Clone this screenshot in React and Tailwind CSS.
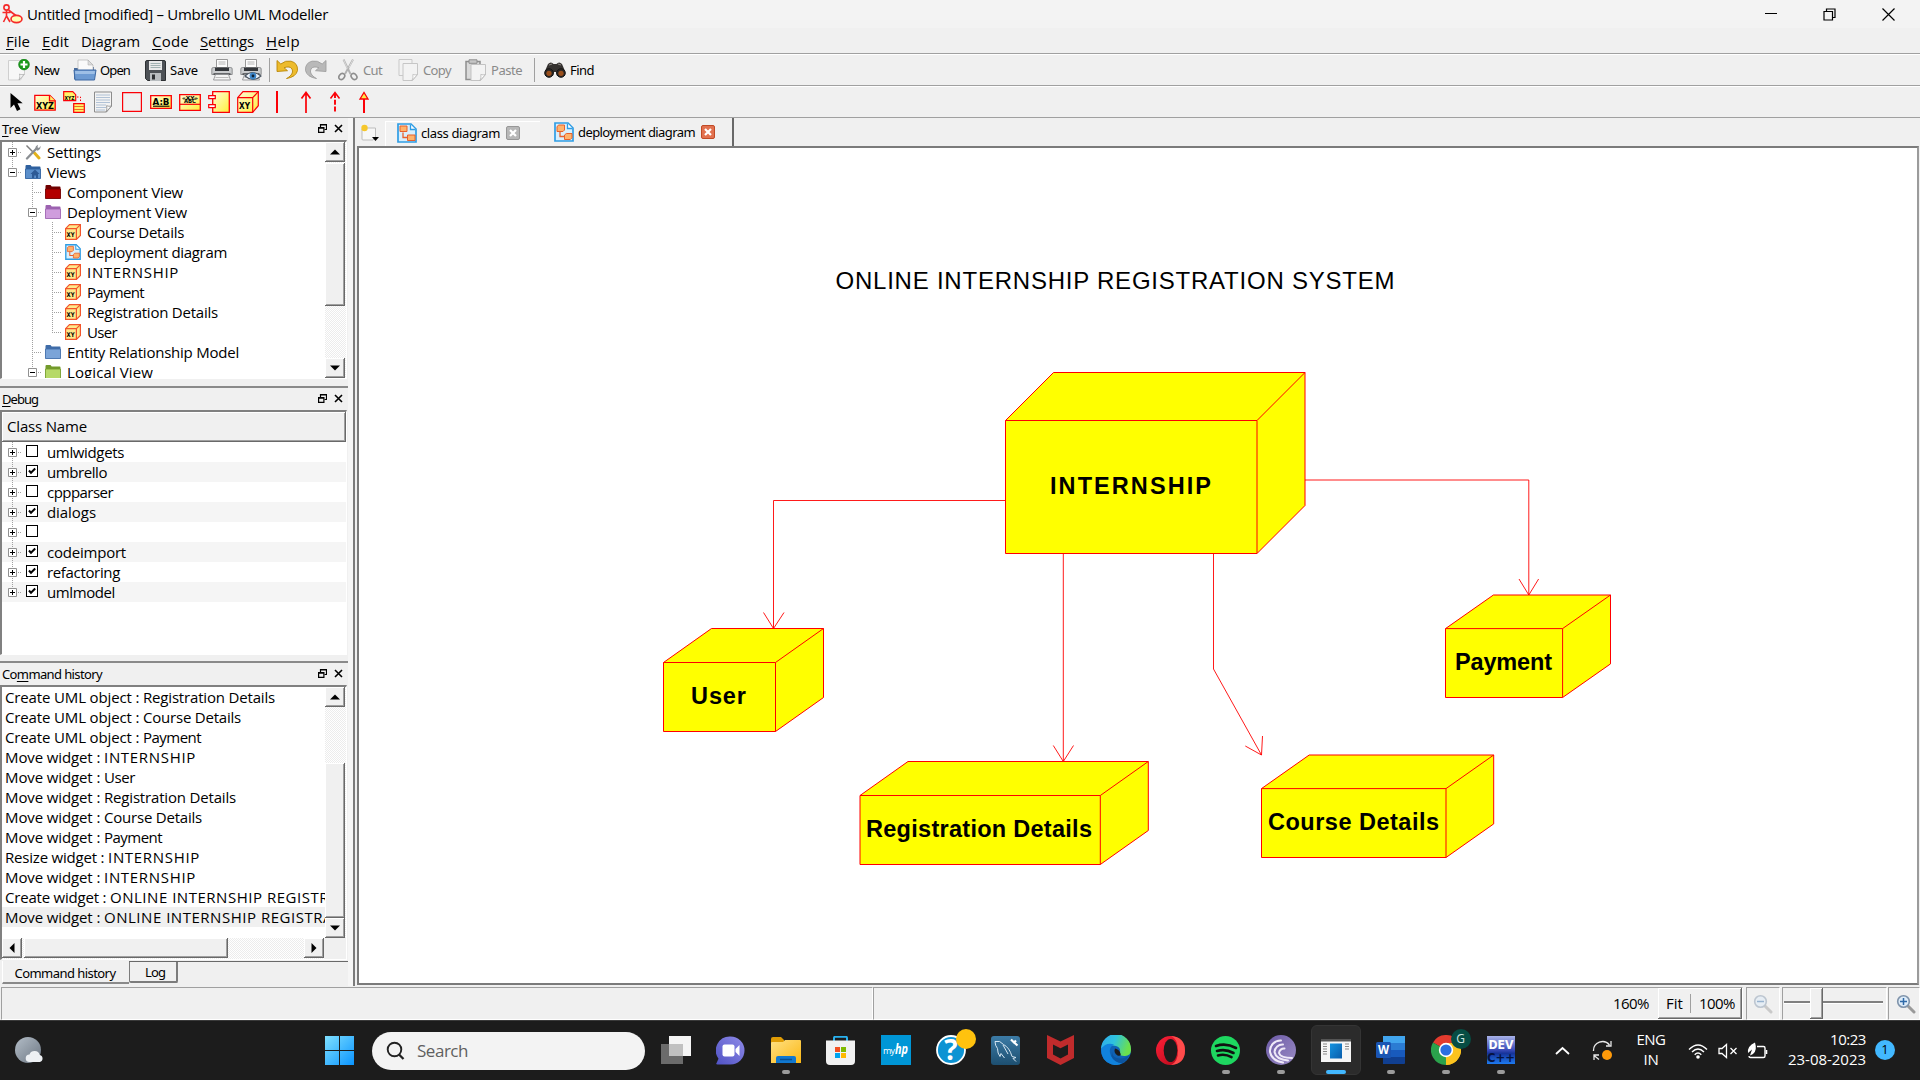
import React, { useLayoutEffect, useRef, useState } from "react";

const UI = "font-['Open_Sans','Noto_Sans',sans-serif]";
const SMALL = "font-['Noto_Sans','Open_Sans',sans-serif]";

/* Label whose letter spacing is computed so that it takes a given width. */
function Fit({ w, className = "", children }) {
  const ref = useRef(null);
  const [ls, setLs] = useState(null);
  useLayoutEffect(() => {
    const el = ref.current;
    const nat = el.getBoundingClientRect().width;
    setLs((w - nat) / Math.max(1, el.textContent.length));
  }, [w]);
  return (
    <span
      ref={ref}
      className={"inline-block shrink-0 whitespace-pre " + className}
      style={ls === null ? undefined : { letterSpacing: ls + "px" }}
    >
      {children}
    </span>
  );
}

const U = ({ children }) => <u className="underline decoration-1 underline-offset-2">{children}</u>;

/* ---------- icons ---------- */
const S = ({ w = 22, h = w, vb, children, className = "" }) => (
  <svg width={w} height={h} viewBox={vb || `0 0 ${w} ${h}`} className={"block shrink-0 " + className}>
    {children}
  </svg>
);

const AppIcon = () => (
  <S w={21} h={20}>
    <g fill="none" stroke="#f52a2a" strokeWidth="1.6">
      <circle cx="4.5" cy="3.5" r="2.6" />
      <path d="M4.500 6v6M.5 8.500h8M4.500 12 1.500 18M4.500 12l3.500 6M6.500 6l8 6" />
      <ellipse cx="14.500" cy="15" rx="5.500" ry="3.600" fill="#ffffb0" />
    </g>
  </S>
);
const NewIcon = () => (
  <S>
    <path d="M.5 1.500h16v13l-4 6.500h-12z" fill="#f7f7f7" stroke="#cfcfcf" />
    <path d="M11 21c1-3 1-4 .5-6 2 1 3 1 5 0z" fill="#fff" stroke="#aaa" strokeWidth=".8" />
    <circle cx="16" cy="5.500" r="5.400" fill="#1c9a1c" stroke="#0d7a12" strokeWidth=".6" />
    <path d="M16 2v7M12.500 5.500h7" stroke="#fff" strokeWidth="2.200" />
  </S>
);
const OpenIcon = () => (
  <S w={24} h={22}>
    <path d="M1 9h4V5h3l3 3h10v12H1z" fill="#4a6a98" />
    <path d="M5 12V1h10l5 5v7z" fill="#fafafa" stroke="#bbb" strokeWidth=".8" />
    <path d="M15 1v5h5z" fill="#ddd" stroke="#aaa" strokeWidth=".5" />
    <path d="M1 11h22l-1.500 10H2z" fill="#6d9bd3" stroke="#3e69a3" />
    <path d="M2 12h20l-.4 3H2.300z" fill="#9dbfe6" />
  </S>
);
const SaveIcon = () => (
  <S w={21} h={21}>
    <path d="M.5 2q0-1.500 1.500-1.500h17q1.500 0 1.500 1.500v18.500H2.500l-2-2z" fill="#4d5156" stroke="#2d3033" />
    <path d="M4 1h13v9H4z" fill="#e9e9e9" />
    <path d="M5.500 3.500h10M5.500 5.500h10M5.500 7.500h10" stroke="#9aa" strokeWidth=".9" />
    <path d="M5 13h11v8H5z" fill="#b9bdc0" />
    <path d="M7 14.500h3v5H7z" fill="#2d3033" />
  </S>
);
const PrinterIcon = ({ eye }) => (
  <S>
    <path d="M5.500.5h11v8h-11z" fill="#fdfdfd" stroke="#8f8f8f" strokeWidth=".9" />
    <path d="M7.500 3h7M7.500 5h7" stroke="#b4b4b4" />
    <path d="M.8 10q0-1.500 1.500-1.500h2.200v2h13v-2h2.200q1.500 0 1.500 1.500v5.500H.8z" fill="#c9cbcd" stroke="#7c7e80" strokeWidth=".8" />
    <path d="M4 8.500h14v3.500H4z" fill="#33363a" />
    <path d="M2.500 15h17" stroke="#3b3e41" strokeWidth="1.400" />
    <path d="M4.500 15.500h13l2 5.500h-17z" fill="#f4f4f4" stroke="#88898b" strokeWidth=".8" />
    <path d="M4.500 18.500h13" stroke="#bbb" />
    {eye && (
      <g>
        <path d="M5 17q7-7 16 0-8 7-16 0z" fill="#eef4fb" stroke="#4b5560" strokeWidth="1.100" />
        <circle cx="13" cy="17" r="3.400" fill="#3d86c9" />
        <circle cx="13" cy="17" r="1.400" fill="#112233" />
      </g>
    )}
  </S>
);
const UndoIcon = ({ dim }) => (
  <S className={dim ? "-scale-x-100" : ""}>
    <path
      d="M1 1.500v11l10.500-.8-3.500-3q6-2 8 1.300 2 4-3 8-1.500 1-2.500 1.500Q20 18 21.500 11.500 22 4 15 2.200 9.500 1 4.800 5z"
      fill={dim ? "#b9b9b9" : "#edbb2c"}
      stroke={dim ? "#9f9f9f" : "#b98708"}
      strokeWidth=".9"
    />
  </S>
);
const CutIcon = () => (
  <S w={20} h={22}>
    <path d="M5.500.5 12.500 15M15 .5 7 15" stroke="#b2b2b2" strokeWidth="1.900" fill="none" />
    <path d="M5.500.5l4 9M15 .5l-4 8" stroke="#e9e9e9" strokeWidth=".7" />
    <ellipse cx="3.800" cy="17.500" rx="2.600" ry="3.300" transform="rotate(38 3.800 17.500)" fill="none" stroke="#8e8e8e" strokeWidth="1.600" />
    <ellipse cx="16" cy="17.500" rx="2.600" ry="3.300" transform="rotate(-38 16 17.500)" fill="none" stroke="#8e8e8e" strokeWidth="1.600" />
  </S>
);
const CopyIcon = () => (
  <S w={21} h={22}>
    <path d="M1 .5h13v16H1z" fill="#f2f2f2" stroke="#c9c9c9" />
    <path d="M5 4.500h14.500v11l-5 6H5z" fill="#f3f3f3" stroke="#c6c6c6" />
    <path d="M14 21.500q1.500-3 .8-6 2.200.8 4.700 0z" fill="#fff" stroke="#bcbcbc" strokeWidth=".8" />
  </S>
);
const PasteIcon = () => (
  <S w={22}>
    <path d="M1 2.500h14v18H1z" fill="#dadada" stroke="#8f8f8f" strokeWidth="1.500" />
    <path d="M4 .8h8v3.500H4z" fill="#c6c6c6" stroke="#8f8f8f" />
    <path d="M6 5.500h14.500v10l-5 6H6z" fill="#f3f3f3" stroke="#c3c3c3" />
    <path d="M15 21.500q1.500-3 .8-6 2.200.8 4.700 0z" fill="#fff" stroke="#b5b5b5" strokeWidth=".8" />
  </S>
);
const FindIcon = () => (
  <S w={22} h={16}>
    <path d="M4 2q3-3 5.500 0h3Q15-1 18 2l3 7v5h-8l-1-4h-2l-1 4H1V9z" fill="#34312f" />
    <path d="M5 3l3-1M14 2l3 1" stroke="#8b8783" strokeWidth="1.200" />
    <circle cx="5" cy="11" r="4.300" fill="#2b2725" stroke="#151515" />
    <circle cx="17" cy="11" r="4.300" fill="#2b2725" stroke="#151515" />
    <circle cx="5" cy="11.300" r="2.600" fill="#9a4f1c" />
    <circle cx="17" cy="11.300" r="2.600" fill="#9a4f1c" />
  </S>
);

const IconText = ({ x, y, size, children, len }) => (
  <text x={x} y={y} fontSize={size} fontWeight="700" fill="#000" textLength={len} lengthAdjust="spacingAndGlyphs" fontFamily="DejaVu Sans, sans-serif">
    {children}
  </text>
);
const Grad = () => (
  <svg width="0" height="0" className="absolute">
    <defs>
      <linearGradient id="yel" x1="0" y1="0" x2="1" y2="1">
        <stop offset="0" stopColor="#fffcdc" />
        <stop offset="1" stopColor="#ffef3a" />
      </linearGradient>
      <linearGradient id="win" x1="0" y1="0" x2="1" y2="1">
        <stop offset="0" stopColor="#7fe0ff" />
        <stop offset="1" stopColor="#0a94ff" />
      </linearGradient>
      <linearGradient id="fold" x1="0" y1="0" x2="1" y2="1">
        <stop offset="0" stopColor="#ffe083" />
        <stop offset="1" stopColor="#fbb814" />
      </linearGradient>
      <linearGradient id="chat" x1="0" y1="1" x2="1" y2="0">
        <stop offset="0" stopColor="#4f52c4" />
        <stop offset="1" stopColor="#8f8ae8" />
      </linearGradient>
      <linearGradient id="edgeTop" x1="0" y1="0" x2="1" y2="0.300">
        <stop offset="0" stopColor="#2ea8ee" />
        <stop offset=".5" stopColor="#2fc3dd" />
        <stop offset="1" stopColor="#6be04d" />
      </linearGradient>
      <linearGradient id="opera" x1="0" y1="0" x2="1" y2="1">
        <stop offset="0" stopColor="#ff2038" />
        <stop offset="1" stopColor="#b00718" />
      </linearGradient>
      <linearGradient id="bt" x1="0" y1="0" x2="1" y2="1">
        <stop offset="0" stopColor="#6c5aa6" />
        <stop offset="1" stopColor="#9a8cc4" />
      </linearGradient>
      <linearGradient id="app" x1="0" y1="0" x2="1" y2="1">
        <stop offset="0" stopColor="#1593e0" />
        <stop offset="1" stopColor="#0a5dab" />
      </linearGradient>
      <linearGradient id="moon" x1="0" y1="0" x2="1" y2="1">
        <stop offset="0" stopColor="#b3bdc7" />
        <stop offset="1" stopColor="#6d7783" />
      </linearGradient>
      <linearGradient id="dev" x1="0" y1="0" x2="0" y2="1">
        <stop offset="0" stopColor="#a8b2e8" />
        <stop offset=".5" stopColor="#3a4ab8" />
        <stop offset=".62" stopColor="#16339a" />
        <stop offset="1" stopColor="#1d7af0" />
      </linearGradient>
      <linearGradient id="sql" x1="0" y1="0" x2="0" y2="1">
        <stop offset="0" stopColor="#3c7ba6" />
        <stop offset="1" stopColor="#1d4f70" />
      </linearGradient>
    </defs>
  </svg>
);

const red = "#fb0007";
const ToolIcons = [
  <S key="a" w={13} h={18}>
    <path d="M.5 0v15l3.500-3.500 3 6.500 3.500-1.700-3-6h5.200z" fill="#000" />
  </S>,
  <S key="b" h={17}>
    <path d="M.8 1.300h15l5.400 5.500v9.400H.8z" fill="url(#yel)" stroke={red} strokeWidth="1.300" />
    <path d="M15.500 1.300v5.500h5.700" fill="#ffee66" stroke={red} strokeWidth="1.300" />
    <IconText x="2" y="14.500" size="9" len="18">XYZ</IconText>
  </S>,
  <S key="c">
    <path d="M.7.7h9l3 3v6H.7z" fill="#fff36a" stroke={red} strokeWidth="1.200" />
    <IconText x="1.500" y="8.500" size="5.500" len="10">XYZ</IconText>
    <path d="M14 6h3.500v5" fill="none" stroke={red} strokeDasharray="1.500 1.500" />
    <path d="M10.700 12.700h10.600v8.600H10.700z" fill="#fff36a" stroke={red} strokeWidth="1.200" />
    <path d="M11 15.500h10M11 18.500h10" stroke="#f06a20" />
  </S>,
  <S key="d" w={20} h={22}>
    <path d="M1.500 1h17v14l-5 6h-12z" fill="#f3f3f3" stroke="#8c8c8c" />
    <path d="M3 4h14M3 6.500h14M3 9h14M3 11.500h14M3 14h10M3 16.500h10M3 19h9" stroke="#a9bcd2" strokeWidth=".9" />
    <path d="M13 21q1.500-3 .6-6.300 2.200 1 4.900.3z" fill="#fff" stroke="#8c8c8c" strokeWidth=".8" />
  </S>,
  <S key="e" w={20} h={22}>
    <path d="M.6 1.600h18.800v18.800H.6z" fill="none" stroke={red} strokeWidth="1.200" />
  </S>,
  <S key="f" h={14}>
    <path d="M.7.7h20.600v12.600H.7z" fill="url(#yel)" stroke={red} strokeWidth="1.300" />
    <IconText x="2.500" y="9.500" size="8.500" len="17">A:B</IconText>
    <path d="M3 11.200h16.500" stroke="#000" strokeWidth="1.100" />
  </S>,
  <S key="g" h={17}>
    <path d="M.7.7h20.600v15.600H.7z" fill="url(#yel)" stroke={red} strokeWidth="1.300" />
    <IconText x="3" y="5.800" size="5.500" len="16">«XY»</IconText>
    <IconText x="5" y="9" size="6" len="12">ABC</IconText>
    <path d="M1 10.300h20" stroke={red} strokeWidth="1.200" />
  </S>,
  <S key="h">
    <path d="M4.700.7h16.600v20.600H4.700z" fill="url(#yel)" stroke={red} strokeWidth="1.300" />
    <path d="M.7 4.700h6.600v3H.7zM.7 13.700h6.600v3H.7z" fill="#fff" stroke={red} strokeWidth="1.200" />
  </S>,
  <S key="i">
    <path d="M.7 6.700 6 .7h15.300v14l-5.600 6.600H.7z" fill="url(#yel)" stroke={red} strokeWidth="1.200" />
    <path d="M.7 6.700h15v14.600M15.700 6.700l5.600-6" fill="none" stroke={red} strokeWidth="1.200" />
    <IconText x="2" y="18" size="9" len="11">XY</IconText>
  </S>,
  <S key="j" w={4} h={22}>
    <path d="M2 0v22" stroke={red} strokeWidth="2" />
  </S>,
  <S key="k" w={12} h={22}>
    <path d="M6 1v21M1.500 7.500 6 1.500l4.500 6" fill="none" stroke={red} strokeWidth="1.700" />
  </S>,
  <S key="l" w={12} h={22}>
    <path d="M6 2v20" fill="none" stroke={red} strokeWidth="1.900" strokeDasharray="5 1.800" />
    <path d="M1.500 7.500 6 1.500l4.500 6" fill="none" stroke={red} strokeWidth="1.500" />
  </S>,
  <S key="m" w={12} h={22}>
    <path d="M6 8v14" stroke={red} strokeWidth="2" />
    <path d="M2 8 6 1.500 10 8z" fill="#ffe94a" stroke={red} strokeWidth="1.300" />
  </S>,
];

const CubeSmall = () => (
  <S w={16}>
    <path d="M.6 4.600 4.500.6h10.900v10.900l-4 3.900H.6z" fill="#ffe98a" stroke="#f2552c" strokeWidth="1.200" />
    <path d="M.6 4.600h10.800v10.800M11.400 4.600l4-4" fill="none" stroke="#f2552c" strokeWidth="1.200" />
    <IconText x="1.500" y="13" size="6.500" len="8">XY</IconText>
  </S>
);
const DiagramIcon = ({ size = 16, dep }) => (
  <S w={size} h={size} vb="0 0 20 20">
    <path d="M1 1h13l5 5v13H1z" fill="#d9effc" stroke="#2f9de4" strokeWidth="1.700" />
    <path d="M13.500 1.500v5h5" fill="#fff" stroke="#2f9de4" strokeWidth="1.300" />
    <path d={dep ? "M3 4.500 4.800 3h5.700v5L9 9.500H3z" : "M3 3h7v5.500H3z"} fill="#ffb36b" stroke="#e8612c" />
    <path d={dep ? "M10.500 13l1.800-1.500H18v4.300L16.300 17.500h-5.800z" : "M10.500 12H18v5.500h-7.500z"} fill="#ffb36b" stroke="#e8612c" />
    <path d="M6 9.500v5h4.500" fill="none" stroke="#e8612c" strokeWidth="1.300" />
  </S>
);
const Folder = ({ c, d, home }) => (
  <S w={16}>
    <path d="M.5 2q0-1 1-1h4l1.200 1.500h8q.8 0 .8 1V14.500H.5z" fill={d} />
    <path d="M.5 5h15v9.500H.5z" fill={c} stroke={d} strokeWidth=".8" />
    {home && <path d="M10 5.500 5.500 10H7v4h2.200v-2.500h1.800V14h2v-4h1.500z" fill="#2d5a96" />}
  </S>
);
const ToolsIcon = () => (
  <S w={16}>
    <path d="M1.500 1.500 8 8" stroke="#7e7e7e" strokeWidth="1.500" fill="none" />
    <path d="M9.500 9l4.500 5" stroke="#e3b21b" strokeWidth="3" strokeLinecap="round" />
    <path d="M2 14.500 11 5" stroke="#8b8f93" strokeWidth="2.300" strokeLinecap="round" />
    <path d="M10.300 5.500q-.6-3.500 2.700-4.700l-.5 2.500 1.500.8 1.500-2q.6 3.500-2.700 4.600z" fill="#8b8f93" />
  </S>
);

/* ---------- window parts ---------- */
const MENU = [
  [24, 12, <><U>F</U>ile</>],
  [27, 12, <><U>E</U>dit</>],
  [59, 12, <>D<U>i</U>agram</>],
  [37, 11, <><U>C</U>ode</>],
  [54, 12, <><U>S</U>ettings</>],
  [34, 0, <><U>H</U>elp</>],
];

const Tb = ({ icon, label, w, g, dim }) => (
  <div className="flex shrink-0 items-center">
    {icon}
    {label && (
      <Fit w={w} className={"text-[13px] leading-none " + g + (dim ? " text-[#8a8a8a]" : " text-black")}>
        {label}
      </Fit>
    )}
  </div>
);

const DockTitle = ({ w, children }) => (
  <div className={"flex h-[22px] items-center justify-between pl-0.5 pr-[5px] text-[13px] leading-none " + SMALL}>
    <Fit w={w}>{children}</Fit>
    <div className="flex items-center gap-[7px] pb-0.5">
      <S w={9} h={9}>
        <path d="M2.500 3V.5h6v5H6.500M2.500 1h6" fill="none" stroke="#000" strokeWidth="1.200" />
        <path d="M.6 3.600h5.300v4.700H.6zM.6 4.200h5.300" fill="none" stroke="#000" strokeWidth="1.200" />
      </S>
      <S w={9} h={9}>
        <path d="M1 1l7 7M8 1 1 8" stroke="#000" strokeWidth="1.600" />
      </S>
    </div>
  </div>
);

const RAISED = "bg-[#f0f0f0] border-r border-b border-[#696969] shadow-[inset_1px_1px_0_#ffffff,inset_-1px_-1px_0_#a0a0a0]";
const Arrow = ({ d }) => (
  <S w={10} h={10}>
    <path
      fill="#000"
      d={{ up: "M0 7.500 5 2.500 10 7.500z", down: "M0 2.500 5 7.500 10 2.500z", left: "M7.500 0 2.500 5 7.500 10z", right: "M2.500 0 7.500 5 2.500 10z" }[d]}
    />
  </S>
);
const Btn = ({ d }) => (
  <div className={"flex h-5 w-5 shrink-0 items-center justify-center " + RAISED}>
    <Arrow d={d} />
  </div>
);

/* One 20px cell of the dotted tree guide. */
const Guide = ({ up, down, right, box }) => (
  <S w={20} h={20}>
    <g stroke="#a0a0a0" strokeDasharray="1 1" fill="none">
      {up && <path d="M10.500 0v10" />}
      {down && <path d="M10.500 10v10" />}
      {right && <path d="M10 10.500h10" />}
    </g>
    {box && (
      <g>
        <path d="M6.500 6.500h8v8h-8z" fill="#fff" stroke="#919191" />
        <path d={box === "+" ? "M8 10.500h5M10.500 8v5" : "M8 10.500h5"} stroke="#000" />
      </g>
    )}
  </S>
);
const Blank = () => <div className="w-5 shrink-0" />;

const TREE = [
  [[{ up: 1, down: 1, right: 1, box: "+" }], <ToolsIcon />, "Settings", 54],
  [[{ up: 1, right: 1, box: "-" }], <Folder c="#5b8fcb" d="#2f619f" home />, "Views", 39],
  [[0, { up: 1, down: 1, right: 1 }], <Folder c="#b30000" d="#700000" />, "Component View", 116],
  [[0, { up: 1, down: 1, right: 1, box: "-" }], <Folder c="#cf9ddd" d="#9c62b0" />, "Deployment View", 120],
  [[0, { up: 1, down: 1 }, { up: 1, down: 1, right: 1 }], <CubeSmall />, "Course Details", 97],
  [[0, { up: 1, down: 1 }, { up: 1, down: 1, right: 1 }], <DiagramIcon dep />, "deployment diagram", 140],
  [[0, { up: 1, down: 1 }, { up: 1, down: 1, right: 1 }], <CubeSmall />, "INTERNSHIP", 92],
  [[0, { up: 1, down: 1 }, { up: 1, down: 1, right: 1 }], <CubeSmall />, "Payment", 57],
  [[0, { up: 1, down: 1 }, { up: 1, down: 1, right: 1 }], <CubeSmall />, "Registration Details", 131],
  [[0, { up: 1, down: 1 }, { up: 1, right: 1 }], <CubeSmall />, "User", 30],
  [[0, { up: 1, down: 1, right: 1 }], <Folder c="#7ba4d8" d="#3f6ca8" />, "Entity Relationship Model", 172],
  [[0, { up: 1, down: 1, right: 1, box: "-" }], <Folder c="#b6d968" d="#739a2b" />, "Logical View", 86],
];
const CLASSES = [
  ["umlwidgets", 77, false],
  ["umbrello", 60, true],
  ["cppparser", 66, false],
  ["dialogs", 49, true],
  ["", 0, false],
  ["codeimport", 79, true],
  ["refactoring", 73, true],
  ["umlmodel", 68, true],
];
/* Each entry: action text and its width, object text and its width. */
const HISTORY = [
  ["Create UML object : ", 138, "Registration Details", 132],
  ["Create UML object : ", 138, "Course Details", 98],
  ["Create UML object : ", 138, "Payment", 58],
  ["Move widget : ", 99, "INTERNSHIP", 92],
  ["Move widget : ", 99, "User", 31],
  ["Move widget : ", 99, "Registration Details", 132],
  ["Move widget : ", 99, "Course Details", 98],
  ["Move widget : ", 99, "Payment", 58],
  ["Resize widget : ", 103, "INTERNSHIP", 92],
  ["Move widget : ", 99, "INTERNSHIP", 92],
  ["Create widget : ", 105, "ONLINE INTERNSHIP REGISTRATION SYSTEM", 329],
  ["Move widget : ", 99, "ONLINE INTERNSHIP REGISTRATION SYSTEM", 329],
];
const HATCH = "bg-[repeating-conic-gradient(#ffffff_0_25%,#ececec_0_50%)] bg-[length:2px_2px]";
const FRAME = "w-[347px] border-t-2 border-l-2 border-r border-b border-t-[#808080] border-l-[#808080] border-r-[#ffffff] border-b-[#ffffff] bg-white";

function Docks() {
  return (
    <div className={"flex w-[348px] shrink-0 flex-col " + UI}>
      <DockTitle w={58}><U>T</U>ree View</DockTitle>
      <div className={"flex h-[239px] " + FRAME}>
        <div className="h-[236px] w-[323px] overflow-hidden">
          {TREE.map(([cells, icon, label, w], i) => (
            <div key={i} className="flex h-5 items-center">
              {cells.map((c, j) => (c ? <Guide key={j} {...c} /> : <Blank key={j} />))}
              <div className="ml-[3px] mr-1.5">{icon}</div>
              <Fit w={w} className="text-[15px] leading-5">{label}</Fit>
            </div>
          ))}
        </div>
        <div className={"flex w-[21px] flex-col " + HATCH}>
          <Btn d="up" />
          <div className={"mt-px h-[143px] w-5 " + RAISED} />
          <div className="flex-1" />
          <Btn d="down" />
        </div>
      </div>
      <div className="mt-[7px] border-t-2 border-[#8a8a8a]" />
      <DockTitle w={36}><U>D</U>ebug</DockTitle>
      <div className={"h-[245px] " + FRAME}>
        <div className={"flex h-[30px] items-center pl-[5px] " + RAISED}>
          <Fit w={80} className="text-[15px]">Class Name</Fit>
        </div>
        {CLASSES.map(([label, w, on], i) => (
          <div key={i} className={"flex h-5 items-center " + (i % 2 ? "bg-[#f5f5f5]" : "bg-white")}>
            <Guide up down={i < 7} right box="+" />
            <div className="mb-0.5 ml-1 mr-[9px] flex h-3 w-3 items-center justify-center border border-black bg-white">
              {on && (
                <S w={8} h={8}>
                  <path d="M1 3.500 3 5.800 7.200 1.500" fill="none" stroke="#000" strokeWidth="2" />
                </S>
              )}
            </div>
            {label && <Fit w={w} className="text-[15px] leading-5">{label}</Fit>}
          </div>
        ))}
      </div>
      <div className="mt-[6px] border-t-2 border-[#8a8a8a]" />
      <DockTitle w={100}>Co<U>m</U>mand history</DockTitle>
      <div className={"flex h-[275px] flex-col " + FRAME}>
        <div className="flex h-[251px]">
          <div className="w-[323px] overflow-hidden">
            {HISTORY.map(([a, aw, b, bw], i) => (
              <div key={i} className={"flex h-5 items-center pl-[3px] text-[15px] leading-5 " + (i === 11 ? "bg-[#f0f0f0]" : "")}>
                <Fit w={aw}>{a}</Fit>
                <Fit w={bw}>{b}</Fit>
              </div>
            ))}
          </div>
          <div className={"flex w-[21px] flex-col " + HATCH}>
            <Btn d="up" />
            <div className="flex-1" />
            <div className={"h-[155px] w-5 " + RAISED} />
            <Btn d="down" />
          </div>
        </div>
        <div className="flex h-[21px] bg-[#f0f0f0]">
          <div className={"flex w-[322px] " + HATCH}>
            <Btn d="left" />
            <div className={"ml-0.5 h-5 w-[204px] " + RAISED} />
            <div className="flex-1" />
            <Btn d="right" />
          </div>
        </div>
      </div>
      <div className={"mt-px flex h-6 items-start text-[13px] leading-none " + SMALL}>
        <div className="ml-0.5 flex h-[23px] w-[127px] items-center justify-center border-b-2 border-[#8a8a8a] border-l border-l-white bg-[#f0f0f0] pr-0.5 pt-[3px]">
          <Fit w={101}>Command history</Fit>
        </div>
        <div className="flex flex-1 items-start border-t border-[#696969]">
          <div className="flex h-[21px] w-[49px] items-center justify-center rounded-b-[2px] border-r-2 border-b-2 border-l border-[#7c7c7c] bg-[#f0f0f0] pl-1 pt-0.5">
            <Fit w={20}>Log</Fit>
          </div>
        </div>
      </div>
    </div>
  );
}

/* ---------- diagram ---------- */
const CUBES = [
  { l: 1005.5, r: 1257, o: 1305, t: 372.5, f: 420.5, b: 553.5, name: "INTERNSHIP", x: 1050, y: 493.5, w: 161 },
  { l: 663.5, r: 775.5, o: 823.5, t: 628.5, f: 662.5, b: 731.5, name: "User", x: 691, y: 703.5, w: 55 },
  { l: 860, r: 1100.3, o: 1148.3, t: 761.5, f: 795.5, b: 864.5, name: "Registration Details", x: 866, y: 836.5, w: 226 },
  { l: 1261.5, r: 1446, o: 1493.7, t: 755, f: 788.6, b: 857.5, name: "Course Details", x: 1268, y: 829.5, w: 171 },
  { l: 1445.5, r: 1562.6, o: 1610.5, t: 595, f: 628.6, b: 697.5, name: "Payment", x: 1455, y: 669.5, w: 97 },
];
const Diagram = () => (
  <svg width="1557" height="834" viewBox="359 148 1557 834" className="block">
    <text x="835.500" y="289" fontSize="24" textLength="559" fontFamily="Liberation Sans, Arial, sans-serif">
      ONLINE INTERNSHIP REGISTRATION SYSTEM
    </text>
    {CUBES.map(({ l, r, o, t, f, b, name, x, y, w }) => {
      const d = o - r;
      return (
        <g key={name}>
          <path d={`M${l} ${f}L${l + d} ${t}H${o}V${b - (f - t)}L${r} ${b}H${l}Z`} fill="#ffff00" stroke="#ff0000" />
          <path d={`M${l} ${f}H${r}V${b}M${r} ${f}L${o} ${t}`} fill="none" stroke="#ff0000" />
          <text x={x} y={y} fontSize="23.500" fontWeight="700" textLength={w} fontFamily="Liberation Sans, Arial, sans-serif">
            {name}
          </text>
        </g>
      );
    })}
    <g fill="none" stroke="#ff0000" strokeWidth="0.900">
      <path d="M1005.500 500.500H773.500V628.500M763.500 612.500l10 16 10.500-16" />
      <path d="M1063.300 553.500V761.500M1053.300 745.500l10 16 10.200-16" />
      <path d="M1213.500 553.500V669L1261.500 755M1245.300 746l16.200 9 1-19" />
      <path d="M1305 480H1528.800V595M1519 579l9.800 16 9.800-16" />
    </g>
  </svg>
);

const CloseBox = ({ c, b }) => (
  <S w={14}>
    <rect x=".5" y=".5" width="13" height="13" rx="1.500" fill={c} stroke={b} />
    <path d="M4 4l6 6M10 4l-6 6" stroke="#fff" strokeWidth="2.200" />
  </S>
);

function Canvas() {
  return (
    <div className="flex min-w-0 flex-1 flex-col border-l-2 border-[#7b7b7b]">
      <div className={"flex h-[28px] items-end pl-[5px] text-[13px] leading-none " + SMALL}>
        <S w={20} h={18} className="mb-1">
          <path d="M3 4h12.500v9L13 16H3q-1 0-1-1V5z" fill="#f7f7f7" stroke="#bdbdbd" />
          <circle cx="4.500" cy="4" r="3.200" fill="#f6c72b" />
          <path d="M12 13h7l-3.500 4z" fill="#000" />
        </S>
        <div className="ml-[5px] flex h-[25px] w-[155px] items-center border-l border-t border-white bg-[#f2f2f2] pb-0.5 pl-[11px]">
          <DiagramIcon size={20} />
          <Fit w={79} className="ml-1">class diagram</Fit>
          <div className="ml-1.5"><CloseBox c="#b7b7b7" b="#979797" /></div>
        </div>
        <div className="flex h-[28px] w-[194px] items-center border-r-2 border-[#696969] bg-[#f0f0f0] pl-[14px]">
          <DiagramIcon size={20} dep />
          <Fit w={117} className="ml-1">deployment diagram</Fit>
          <div className="ml-1.5"><CloseBox c="#e2714f" b="#c04a26" /></div>
        </div>
      </div>
      <div className="ml-0.5 mr-px flex-1 overflow-hidden border-2 border-[#7b7b7b] border-r-[#9b9b9b] bg-white">
        <Diagram />
      </div>
      <div className="h-px" />
    </div>
  );
}

const Lens = ({ sign, dim }) => (
  <S w={20} className={dim ? "opacity-45" : ""}>
    <path d="M11.500 11.500l6.500 6.500" stroke="#9a9a9a" strokeWidth="3" strokeLinecap="round" />
    <circle cx="7.500" cy="7.500" r="5.800" fill="#dcebf9" stroke="#7f93aa" strokeWidth="1.600" />
    <path d={sign === "+" ? "M4 7.500h7M7.500 4v7" : "M4 7.500h7"} stroke="#2f6aa8" strokeWidth="1.500" />
  </S>
);
const SUNK = "border-t border-l border-[#a0a0a0] border-b border-b-white border-r border-r-white";

function StatusBar() {
  return (
    <div className={"flex h-[34px] shrink-0 items-stretch pt-px text-[15px] leading-none " + UI}>
      <div className={"ml-px w-[872px] shrink-0 " + SUNK} />
      <div className={"flex w-[870px] shrink-0 items-stretch justify-end " + SUNK}>
        <Fit w={36} className="mr-[9px] self-center">160%</Fit>
        <div className={"flex w-[84px] items-center pl-2 " + RAISED}>
          <Fit w={17}>Fit</Fit>
          <div className="ml-[7px] mr-2 h-[19px] w-px bg-[#a0a0a0]" />
          <Fit w={36}>100%</Fit>
        </div>
      </div>
      <div className={"ml-[3px] flex w-[34px] shrink-0 items-center justify-center " + SUNK}><Lens sign="-" dim /></div>
      <div className={"ml-0.5 flex w-[105px] shrink-0 items-stretch " + SUNK}>
        <div className="ml-px mt-[13px] h-[3px] w-[26px] border-t-2 border-b border-t-[#808080] border-b-white" />
        <div className={"w-[13px] " + RAISED} />
        <div className="mt-[13px] h-[3px] w-[60px] border-t-2 border-b border-t-[#808080] border-b-white" />
      </div>
      <div className={"ml-px flex flex-1 items-center pl-[7px] " + SUNK}><Lens sign="+" /></div>
    </div>
  );
}

/* ---------- taskbar ---------- */
const APPS = [
  { i: <S w={30} h={28}><path d="M0 8h22v20H0z" fill="#6b6b6b" /><path d="M8 0h22v20H8z" fill="#f4f4f4" /><path d="M8 8h14v12H8z" fill="#c0c0c0" /></S> },
  { i: <S w={29}><path d="M14.500.5a14 14 0 1 1 0 28H1.500q-2 0-.8-1.800l1.800-4A14 14 0 0 1 14.500.5z" fill="url(#chat)" /><rect x="6.500" y="8.500" width="12" height="12" rx="2" fill="#fff" /><path d="M19.500 13l4-4v11l-4-4z" fill="#fff" /></S> },
  { dot: 1, i: <S w={30} h={28}><path d="M0 3q0-2 2-2h8l3 3v5H0z" fill="#e09c05" /><path d="M0 7q0-1 1-1h11l2-2h15q1 0 1 1v22H0z" fill="url(#fold)" /><path d="M5 27v-5q0-2 2-2h16q2 0 2 2v5z" fill="#1178cf" /><path d="M9 23.500h12" stroke="#094f91" strokeWidth="1.500" /></S> },
  { i: <S w={29}><path d="M8 5V2q0-1.200 1.200-1.200h10.600Q21 .8 21 2v3" fill="none" stroke="#29b1ee" strokeWidth="2" /><path d="M0 4.500h29V25q0 4-4 4H4q-4 0-4-4z" fill="#f1f1f1" /><path d="M9 11h5v5H9z" fill="#f25022" /><path d="M15 11h5v5h-5z" fill="#7fba00" /><path d="M9 17h5v5H9z" fill="#00a4ef" /><path d="M15 17h5v5h-5z" fill="#ffb900" /></S> },
  { i: <S w={30}><path d="M0 0h30v30H0z" fill="#0096d6" /><text x="2" y="18.500" fontSize="9" fill="#fff" textLength="12" fontFamily="Open Sans, sans-serif">my</text><text x="14" y="18.500" fontSize="14" fontStyle="italic" fontWeight="700" fill="#fff" textLength="13" lengthAdjust="spacingAndGlyphs" fontFamily="Open Sans, sans-serif">hp</text></S> },
  { badge: <div className="h-5 w-5 rounded-full bg-[#ffc20e]" />, i: <S w={30}><circle cx="15" cy="15" r="14" fill="#0c93d3" stroke="#fff" strokeWidth="1.800" /><text x="15" y="25" fontSize="28" fontWeight="700" textAnchor="middle" fill="#fff" fontFamily="Open Sans, sans-serif">?</text></S> },
  { i: <S w={29}><rect width="29" height="29" rx="3" fill="url(#sql)" /><path d="M4 5.500q5-1.500 8.500 3 6 3 8.500 12l4 1-3 1 3 3M4 5.500q0 4 2.500 7 0 5 2.500 8l1-3 3.500 4.500M12 9l5 9" fill="none" stroke="#d5e6f2" strokeWidth="1" /><path d="M20 3.500l3 3 2-2M22 5.500l4.500 4" stroke="#fff" strokeWidth="2.200" fill="none" /></S> },
  { i: <S w={27} h={30}><path d="M0 0l13.500 6.500L27 0v23l-13.500 7L0 23z" fill="#c02b2c" /><path d="M6 9.500l7.500 3.700L21 9.500v10L13.500 23.500 6 19.500z" fill="#1c1c1c" /></S> },
  { i: <S w={30}><circle cx="15" cy="15" r="15" fill="#0f62b5" /><path d="M0 14A15 15 0 0 1 30 14q.5 6.500-6 7-6 .3-5-3.500 1-5-4-6.500Q5 8.500 0 14z" fill="url(#edgeTop)" /><path d="M0 14Q5 7 13 9.500 6.500 13 10 21q3 6 11 7.500-5 2.500-10.500 1Q0 26 0 14z" fill="#1182dc" /><path d="M11 17q1 7 9 6.500 5-.3 8-3.500-2.500 6-7 8.300-8-1-10.500-7z" fill="#0c55a0" /><path d="M14 13.500q-1.800 4 2.500 7 4 1 3-2-1-4-5.500-5z" fill="#1c1c1c" /></S> },
  { i: <S w={29}><ellipse cx="14.500" cy="14.500" rx="14.500" ry="14.500" fill="url(#opera)" /><path d="M15 0q14 1 14 14.500T15 29q7-3 7-14.500T15 0z" fill="#ff4b4b" /><ellipse cx="14.500" cy="14.500" rx="6.800" ry="11.500" fill="#1c1c1c" /></S> },
  { dot: 1, i: <S w={29}><circle cx="14.500" cy="14.500" r="14.500" fill="#1ed760" /><path d="M5 10q10-3.500 20 2M6 15q8.500-2.500 16.500 2M7 19.500q7-2 13.500 1.700" fill="none" stroke="#111" strokeWidth="2.600" strokeLinecap="round" /></S> },
  {
    dot: 1,
    i: (
      <S w={30}>
        <circle cx="15" cy="15" r="15" fill="url(#bt)" />
        <g fill="none" stroke="#efeaf8" strokeWidth="2" strokeLinecap="round">
          <path d="M15 5.500A10.500 10.500 0 0 0 4 17Q6 26 17 27.500" />
          <path d="M17 9.500A8 8 0 0 0 8.500 17Q10 24.500 22 25.500" />
          <path d="M18.500 13.500A5 5 0 0 0 13 18Q14.500 23 26 23" />
        </g>
      </S>
    ),
  },
  { active: 1, i: <S w={30} h={23}><path d="M0 0h30v23H0z" fill="#f6f6f6" /><path d="M0 0h30v2.500H0z" fill="#555" /><path d="M9 4.500h12v15H9z" fill="url(#app)" /><path d="M2 5h4M2 7.500h4M2 10h4M2 12.500h4M2 15h4M24 5h4M24 7.500h4M24 10h4" stroke="#888" /></S> },
  { dot: 1, i: <S w={29} h={28}><path d="M7 0h22v7H7z" fill="#41a5ee" /><path d="M7 7h22v7H7z" fill="#2b7cd3" /><path d="M7 14h22v7H7z" fill="#185abd" /><path d="M7 21h22v6q0 1-1 1H7z" fill="#103f91" /><rect y="6" width="15" height="16" rx="1.500" fill="#1a55b3" /><text x="7.500" y="18" fontSize="11.500" fontWeight="700" textAnchor="middle" fill="#fff" fontFamily="Open Sans, sans-serif">W</text></S> },
  { dot: 1, badge: <div className={"flex h-5 w-5 items-center justify-center rounded-full bg-[#074d44] text-[12px] text-[#cfe7e2] " + UI}>G</div>, i: <S w={30}><path d="M15 15 2 7.500A15 15 0 0 1 28 7.500z" fill="#e33b2e" /><path d="M15 15 28 7.500A15 15 0 0 1 15 30z" fill="#fcc31e" /><path d="M15 15v15A15 15 0 0 1 2 7.500z" fill="#2ba24c" /><path d="M15 8h13.300A15 15 0 0 1 15 30l6.500-11z" fill="#fcc31e" /><circle cx="15" cy="15" r="7.200" fill="#fff" /><circle cx="15" cy="15" r="5.600" fill="#2a6fe0" /></S> },
  { dot: 1, i: <S w={30} h={28}><path d="M1 0h28v28H1z" fill="url(#dev)" /><text x="2.500" y="12.500" fontSize="12.500" fontWeight="700" fill="#fff" textLength="25" lengthAdjust="spacingAndGlyphs" fontFamily="DejaVu Sans, sans-serif">DEV</text><text x="1" y="26" fontSize="13" fontWeight="700" fill="#06133f" textLength="28" lengthAdjust="spacingAndGlyphs" fontFamily="DejaVu Sans, sans-serif">C++</text></S> },
];

function Taskbar() {
  return (
    <div className={"flex h-[60px] shrink-0 items-center border-t border-[#3a3a3a] bg-[#1c1c1c] text-white " + UI}>
      <div className="flex w-[325px] shrink-0 pl-[15px]">
        <S w={29}>
          <circle cx="13" cy="14" r="13" fill="url(#moon)" />
          <path d="M14.500 26a3.800 3.800 0 0 1 0-7.600 5.500 5.500 0 0 1 10.300.6 3.600 3.600 0 0 1 0 7z" fill="#edf0f3" />
        </S>
      </div>
      <S w={29}>
        <path d="M0 0h14v14H0zM15 0h14v14H15zM0 15h14v14H0zM15 15h14v14H15z" fill="url(#win)" />
      </S>
      <div className="ml-[18px] flex h-[38px] w-[273px] shrink-0 items-center rounded-full bg-[#f3f3f3] pl-3.5">
        <S w={19} h={20}>
          <circle cx="8.500" cy="8.500" r="6.800" fill="none" stroke="#222" strokeWidth="1.900" />
          <path d="M13 13.500l4.500 4.500" stroke="#222" strokeWidth="2.300" />
        </S>
        <Fit w={51} className="ml-3 text-[17px] text-[#5f5f5f]">Search</Fit>
      </div>
      <div className="ml-[3px] flex pb-px">
        {APPS.map((a, k) => (
          <div key={k} className="flex h-[58px] w-[55px] items-center justify-center">
            <div className={"relative flex h-[50px] w-[50px] items-center justify-center rounded-md " + (a.active ? "border border-[#343434] bg-[#2b2b2b]" : "")}>
              {a.i}
              {a.badge && <div className="absolute right-0 top-1">{a.badge}</div>}
              {a.dot && <div className="absolute bottom-px left-[21px] h-1 w-2 rounded-full bg-[#9b9b9b]" />}
              {a.active && <div className="absolute bottom-0 left-3.5 h-1 w-5 rounded-full bg-[#42b8ff]" />}
            </div>
          </div>
        ))}
      </div>
      <div className="ml-[27px] flex items-center">
        <S w={15} h={9}><path d="M1 8l6.500-6L14 8" fill="none" stroke="#fff" strokeWidth="1.800" /></S>
        <S w={21} className="ml-[22px]">
          <path d="M1.500 11A9 9 0 0 1 17.500 5M19 1v5h-5M7 19.500l-5-4M2 20v-5h5" fill="none" stroke="#e8e8e8" strokeWidth="1.300" />
          <circle cx="15" cy="15" r="5" fill="#ff9a0a" />
        </S>
        <div className="mb-[3px] ml-[23px] flex w-[30px] flex-col items-center text-[15px] leading-5">
          <Fit w={29}>ENG</Fit>
          <Fit w={15}>IN</Fit>
        </div>
        <S w={20} h={16} className="ml-[22px]">
          <g fill="none" stroke="#fff" strokeWidth="1.400">
            <path d="M1 6.500q9-9 18 0M4 9q6-6 12 0M6.700 11.700q3.300-3.300 6.600 0" />
          </g>
          <circle cx="10" cy="14" r="1.800" fill="#fff" />
        </S>
        <S w={20} h={16} className="ml-2.5">
          <path d="M1 5.500h3l4.500-4v13L4 10.500H1z" fill="none" stroke="#fff" strokeWidth="1.300" />
          <path d="M12.500 5l6 6M18.500 5l-6 6" stroke="#fff" strokeWidth="1.300" />
        </S>
        <S w={21} h={18} className="ml-[9px]">
          <path d="M10 4.500h6.500q1.500 0 1.500 1.500v8q0 1.500-1.500 1.500h-13q-1.500 0-1.500-1.500" fill="none" stroke="#fff" strokeWidth="1.400" />
          <path d="M19.500 8v4" stroke="#fff" strokeWidth="1.600" />
          <path d="M1 11Q0 4 8 .5q2.500 8-2 11.500l-3 1.500 2-6z" fill="#fff" />
        </S>
        <div className="mb-1 ml-[13px] flex w-[85px] flex-col items-end text-[15px] leading-5">
          <Fit w={36}>10:23</Fit>
          <Fit w={78}>23-08-2023</Fit>
        </div>
        <div className="mb-px ml-[9px] flex h-5 w-5 items-center justify-center rounded-full bg-[#42b8ff] text-[13px] text-black">1</div>
      </div>
    </div>
  );
}

const Sep = ({ className }) => <div className={"h-6 w-px shrink-0 bg-[#a0a0a0] " + className} />;

export default function App() {
  return (
    <div className="flex h-[1080px] w-[1920px] flex-col overflow-hidden bg-[#f0f0f0] text-black">
      <Grad />
      <div className={"flex h-7 shrink-0 items-center bg-[#f3f3f3] pl-0.5 text-[15px] " + UI}>
        <AppIcon />
        <Fit w={301} className="ml-1">Untitled [modified] – Umbrello UML Modeller</Fit>
        <div className="flex-1" />
        <S w={12} h={12}><path d="M0 5.500h12" stroke="#000" /></S>
        <S w={13} h={13} className="ml-[46px]">
          <path d="M1 3.500h8.500V12H1zM3.500 3V1H12v8.500h-2" fill="none" stroke="#000" strokeWidth="1.200" />
        </S>
        <S w={13} h={13} className="ml-[46px] mr-[25px]"><path d="M.5.5l12 12M12.500.5l-12 12" stroke="#000" strokeWidth="1.200" /></S>
      </div>
      <div className={"flex h-[26px] shrink-0 items-center border-b border-[#a0a0a0] pl-1.5 pt-0.5 text-[15px] " + UI}>
        {MENU.map(([w, g, l], k) => (
          <Fit key={k} w={w} className={g === 12 ? "mr-3" : g ? "mr-[11px]" : ""}>{l}</Fit>
        ))}
      </div>
      <div className={"flex h-8 shrink-0 items-center border-b border-t border-b-[#a0a0a0] border-t-white pl-2 " + SMALL}>
        <Tb icon={<NewIcon />} label="New" w={25} g="ml-1" />
        <div className="w-3.5" />
        <Tb icon={<OpenIcon />} label="Open" w={30} g="ml-[3px]" />
        <div className="w-[15px]" />
        <Tb icon={<SaveIcon />} label="Save" w={28} g="ml-1" />
        <div className="w-[13px]" />
        <PrinterIcon />
        <div className="w-[7px]" />
        <PrinterIcon eye />
        <Sep className="ml-[7px] mr-1.5" />
        <UndoIcon />
        <div className="w-[7px]" />
        <UndoIcon dim />
        <div className="w-[11px]" />
        <Tb icon={<CutIcon />} label="Cut" w={19} g="ml-[5px]" dim />
        <div className="w-4" />
        <Tb icon={<CopyIcon />} label="Copy" w={28} g="ml-1" dim />
        <div className="w-3.5" />
        <Tb icon={<PasteIcon />} label="Paste" w={31} g="ml-1" dim />
        <Sep className="ml-3 mr-[9px]" />
        <Tb icon={<FindIcon />} label="Find" w={24} g="ml-1" />
      </div>
      <div className="flex h-8 shrink-0 items-center border-b border-t border-b-[#a0a0a0] border-t-white pl-[1.5px]">
        {ToolIcons.map((ic, k) => (
          <div key={k} className="flex w-[29px] justify-center">{ic}</div>
        ))}
      </div>
      <div className="flex h-[868px] shrink-0">
        <Docks />
        <div className="w-[5px] shrink-0 bg-[#f6f6f6]" />
        <Canvas />
      </div>
      <StatusBar />
      <Taskbar />
    </div>
  );
}
